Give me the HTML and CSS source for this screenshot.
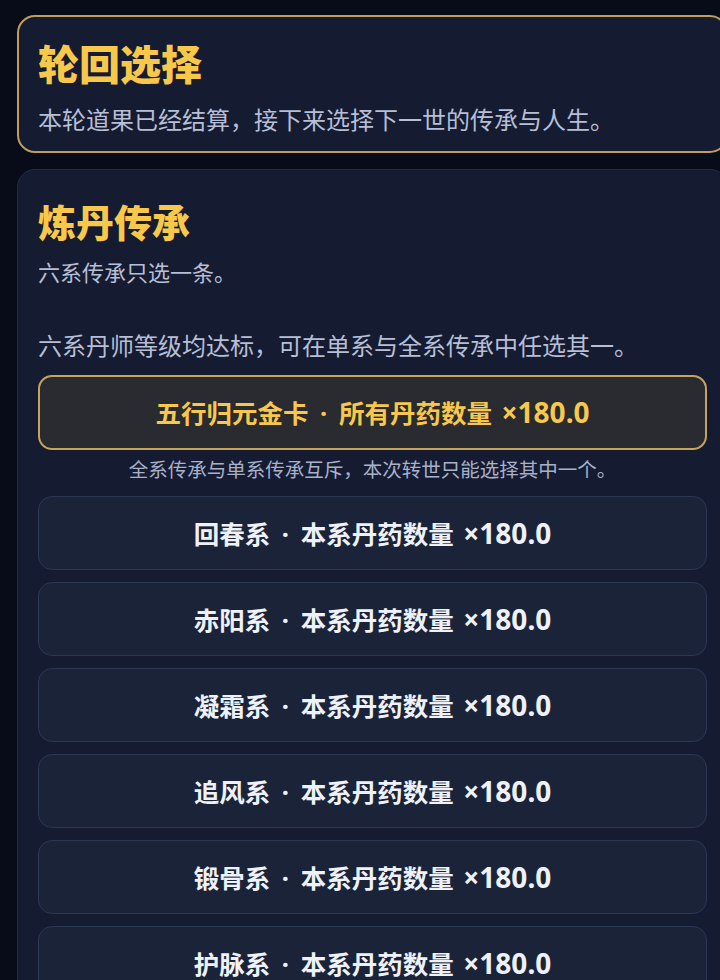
FILE: index.html
```html
<!DOCTYPE html>
<html lang="zh-CN">
<head>
<meta charset="utf-8">
<title>轮回选择</title>
<link rel="stylesheet" href="styles.css">
</head>
<body>
<div class="page">
  <section class="card card-intro">
    <h1 class="title title-lg">轮回选择</h1>
    <p class="lead">本轮道果已经结算，接下来选择下一世的传承与人生。</p>
  </section>
  <section class="card card-main">
    <h2 class="title title-md">炼丹传承</h2>
    <p class="hint">六系传承只选一条。</p>
    <p class="lead lead-gap">六系丹师等级均达标，可在单系与全系传承中任选其一。</p>
    <button class="opt opt-gold"><span class="label">五行归元金卡<span class="dot"> · </span>所有丹药数量 <span class="num">×180.0</span></span></button>
    <p class="note">全系传承与单系传承互斥，本次转世只能选择其中一个。</p>
    <div class="opts">
      <button class="opt"><span class="label">回春系<span class="dot"> · </span>本系丹药数量 <span class="num">×180.0</span></span></button>
      <button class="opt"><span class="label">赤阳系<span class="dot"> · </span>本系丹药数量 <span class="num">×180.0</span></span></button>
      <button class="opt"><span class="label">凝霜系<span class="dot"> · </span>本系丹药数量 <span class="num">×180.0</span></span></button>
      <button class="opt"><span class="label">追风系<span class="dot"> · </span>本系丹药数量 <span class="num">×180.0</span></span></button>
      <button class="opt"><span class="label">锻骨系<span class="dot"> · </span>本系丹药数量 <span class="num">×180.0</span></span></button>
      <button class="opt"><span class="label">护脉系<span class="dot"> · </span>本系丹药数量 <span class="num">×180.0</span></span></button>
    </div>
  </section>
</div>
</body>
</html>
```

FILE: styles.css
```css
* { box-sizing: border-box; }
html, body {
  margin: 0;
  padding: 0;
  background: #080c18;
  overflow: hidden;
}
body {
  font-family: "Noto Sans CJK SC", "Noto Sans", sans-serif;
  color: #b7bfd6;
}
.page {
  width: 728px;
  padding: 15px 0 0 17px;
  display: flex;
  flex-direction: column;
  gap: 16px;
}
.card {
  width: 711px;
  background: #151c32;
  border-radius: 18px;
}
.card-intro {
  border: 2px solid #bf9d5a;
  padding: 20px 19px 15px;
}
.card-main {
  border: 1px solid #232c47;
  padding: 28px 20px 40px;
}
.title {
  margin: 0;
  color: #f8c84a;
  font-weight: 900;
}
.title-lg {
  font-size: 41px;
  line-height: 50px;
}
.title-md {
  font-size: 38px;
  line-height: 46px;
}
.lead {
  margin: 15px 0 0;
  font-size: 24px;
  line-height: 34px;
  color: #b7bfd6;
}
.hint {
  margin: 12px 0 0;
  font-size: 22px;
  line-height: 31px;
  color: #b7bfd6;
}
.lead-gap {
  margin-top: 41px;
}
.opt {
  display: flex;
  align-items: center;
  justify-content: center;
  width: 100%;
  height: 74px;
  margin: 0;
  padding: 0;
  font-family: "Noto Sans", "Noto Sans CJK SC", sans-serif;
  font-size: 25.5px;
  font-weight: 700;
  white-space: pre;
  color: #eef1f8;
  background: #1b2339;
  border: 1px solid #2c3655;
  border-radius: 14px;
}
.label {
  line-height: 34px;
}
.dot {
  margin: 0 5px;
}
.num {
  margin-left: 3px;
  font-size: 28px;
}
.opt-gold {
  margin-top: 13px;
  height: 75px;
  color: #f8c84a;
  background: #2a2a31;
  border: 2px solid #c6a45b;
}
.note {
  margin: 5px 0 0;
  text-align: center;
  font-size: 19.5px;
  line-height: 28px;
  color: #a9b1c9;
}
.opts {
  margin-top: 13px;
  display: flex;
  flex-direction: column;
  gap: 12px;
}
```
